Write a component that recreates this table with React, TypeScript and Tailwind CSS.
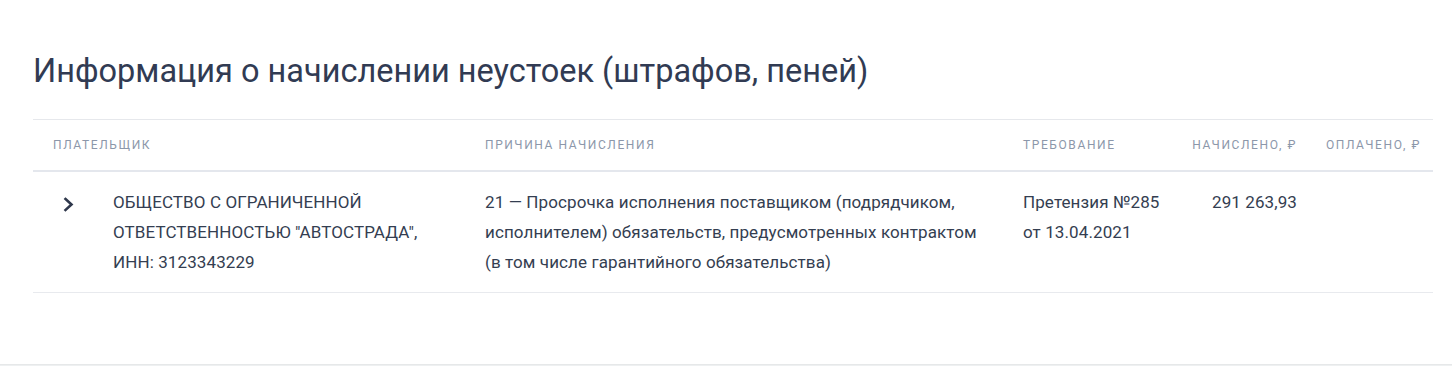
export default function App() {
    return (
        <div className="min-h-[366px] bg-white flex flex-col font-['Roboto',sans-serif]">
            <section className="pl-[33px] pr-[19px] pt-[51px] pb-[71px]">
                <h1 className="text-[32.5px] leading-[40px] text-[#313b53] mb-7">
                    Информация о начислении неустоек (штрафов, пеней)
                </h1>

                {/* Table */}
                <div className="border-t border-[#e6e8ec]">
                    {/* Header */}
                    <div className="grid grid-cols-[432px_538px_171px_143px_116px] h-[52px] items-center border-b-2 border-[#e4e7ed] text-[12px] uppercase tracking-[1.6px] text-[#8c97aa]">
                        <div className="px-5">Плательщик</div>
                        <div className="px-5">Причина начисления</div>
                        <div className="px-5">Требование</div>
                        <div className="pl-2 pr-5 text-right">Начислено, ₽</div>
                        <div className="pl-2 pr-3 text-right">Оплачено, ₽</div>
                    </div>

                    {/* Row */}
                    <div className="grid grid-cols-[432px_538px_171px_143px_116px] py-[15px] border-b border-[#e8eaee] text-[17px] tracking-[0.1px] leading-[30px] text-[#343e51]">
                        <div className="flex pl-5">
                            <div className="w-[60px] shrink-0 pl-2.5 pt-[10px]">
                                <svg className="w-[11px] h-[15px]" viewBox="0 0 11 15" fill="none">
                                    <path d="M2.5 2l6 5.5-6 5.5" stroke="#2f384c" strokeWidth="2.6" strokeLinecap="square" />
                                </svg>
                            </div>
                            <div className="pr-3">
                                ОБЩЕСТВО С ОГРАНИЧЕННОЙ ОТВЕТСТВЕННОСТЬЮ "АВТОСТРАДА", ИНН: 3123343229
                            </div>
                        </div>
                        <div className="pl-5 pr-3">
                            21 — Просрочка исполнения поставщиком (подрядчиком, исполнителем) обязательств, предусмотренных контрактом (в том числе гарантийного обязательства)
                        </div>
                        <div className="pl-5 pr-1">
                            Претензия №285 от 13.04.2021
                        </div>
                        <div className="px-5 text-right">291 263,93</div>
                        <div className="pr-3 text-right"></div>
                    </div>
                </div>
            </section>
            <div className="h-[40px] bg-[#eef0f1] border-t border-[#e6e8e9]" />
        </div>
    );
}
